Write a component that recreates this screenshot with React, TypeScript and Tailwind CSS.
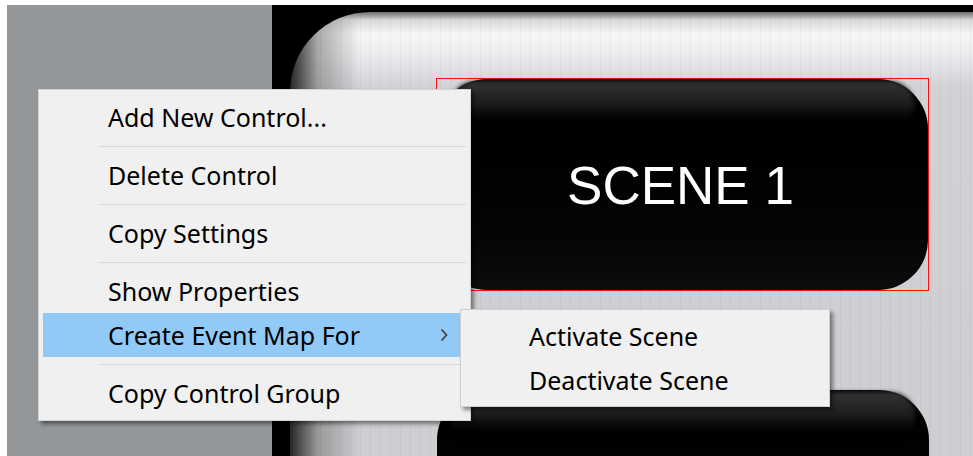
import { Fragment } from 'react';

type MenuItem = { label: string; sep?: boolean; active?: boolean; sub?: boolean };

const items: MenuItem[] = [
    { label: 'Add New Control...', sep: true },
    { label: 'Delete Control', sep: true },
    { label: 'Copy Settings', sep: true },
    { label: 'Show Properties' },
    { label: 'Create Event Map For', active: true, sub: true, sep: true },
    { label: 'Copy Control Group' },
];

const subItems = ['Activate Scene', 'Deactivate Scene'];

const Chevron = () => (
    <svg width="10" height="16" viewBox="0 0 10 16" className="shrink-0">
        <polyline points="2.5,2.5 7.5,8 2.5,13.5" fill="none" stroke="#3a3a3a" strokeWidth="1.6" />
    </svg>
);

const SceneButton = ({ label }: { label?: string }) => (
    <div className="grid h-full rounded-[50px] bg-gradient-to-b from-black to-[#0c0c0c]">
        <div className="[grid-area:1/1] mx-[14px] mt-[2px] h-[48px] rounded-full bg-gradient-to-b from-[#333432] via-[#1c1c1c] to-black blur-[2px]" />
        {label && (
            <div className="[grid-area:1/1] flex items-center justify-center pr-[4px] pt-[2px] text-[53px] text-white font-['Liberation_Sans',Arial,sans-serif]">
                {label}
            </div>
        )}
    </div>
);

const App = () => {
    return (
        <div className="relative w-[973px] h-[456px] overflow-hidden bg-white pt-[5px] pl-[7px] flex font-['Noto_Sans',sans-serif]">
            <div className="w-[265px] shrink-0 bg-[#939799]" />

            {/* scene canvas */}
            <div className="flex-1 bg-black pt-[7px] pl-[18px]">
                <div className="h-full rounded-tl-[80px] pl-[146px] pt-[66px] [background-image:repeating-linear-gradient(90deg,rgba(0,0,0,0.035)_0_1px,transparent_1px_10px),linear-gradient(90deg,rgba(30,30,30,0.95)_0,rgba(110,110,110,0.55)_28px,rgba(200,200,200,0)_70px),linear-gradient(180deg,#6e6e6e_0,#d9d9db_8px,#f6f5f8_22px,#eeedf0_40px,#d3d1d5_75px,#cfcdd1_100%)]">
                    <div className="w-[493px] h-[213px] border border-[#ff1010]">
                        <SceneButton label="SCENE 1" />
                    </div>
                    <div className="w-[493px] h-[120px] mt-[99px] pl-[1px]">
                        <SceneButton />
                    </div>
                </div>
            </div>

            {/* context menu */}
            <div className="absolute left-[38px] top-[89px] w-[433px] h-[332px] bg-[#f0f0f0] border border-[#d4d4d4] shadow-[3px_3px_4px_rgba(0,0,0,0.45)] px-[4px] py-[5px] text-[25px] text-black">
                {items.map((it) => (
                    <Fragment key={it.label}>
                        <div className={`h-[44px] flex items-center pl-[65px] pr-[17px] ${it.active ? 'bg-[#91c9f7]' : ''}`}>
                            <span className="flex-1 leading-none">{it.label}</span>
                            {it.sub && <Chevron />}
                        </div>
                        {it.sep && (
                            <div className="h-[14px] flex items-center pl-[56px]">
                                <div className="h-px flex-1 bg-[#d7d7d7]" />
                            </div>
                        )}
                    </Fragment>
                ))}
            </div>

            {/* submenu */}
            <div className="absolute left-[460px] top-[309px] w-[370px] h-[98px] bg-[#f0f0f0] border border-[#cfcfcf] shadow-[3px_3px_4px_rgba(0,0,0,0.45)] py-[4px] text-[25px] text-black">
                {subItems.map((s) => (
                    <div key={s} className="h-[44px] flex items-center pl-[68px] leading-none">
                        {s}
                    </div>
                ))}
            </div>
        </div>
    );
};

export default App;
